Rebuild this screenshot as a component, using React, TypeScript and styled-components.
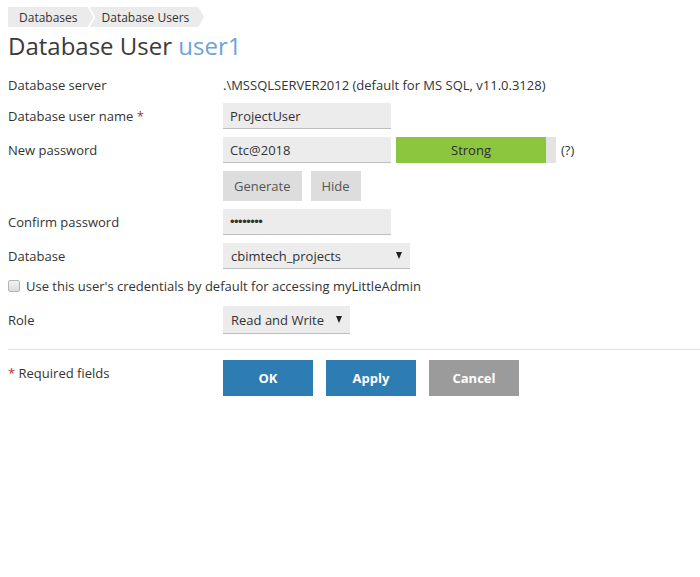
import React from "react";
import styled, { createGlobalStyle } from "styled-components";

const GlobalStyle = createGlobalStyle`
  html, body {
    margin: 0;
    padding: 0;
    background: #ffffff;
  }
  body {
    font-family: "Open Sans", "Liberation Sans", sans-serif;
    font-size: 13px;
    color: #333333;
  }
`;

const Page = styled.div`
  padding: 7px 0 0 8px;
`;

const Breadcrumbs = styled.nav`
  display: flex;
  height: 20px;
`;

const Crumb = styled.a<{ $first?: boolean }>`
  display: flex;
  align-items: center;
  height: 20px;
  background: #ebebeb;
  color: #333;
  font-size: 12px;
  text-decoration: none;
  padding: ${(p) => (p.$first ? "0 16px 0 11px" : "0 15px 0 12px")};
  margin-left: ${(p) => (p.$first ? "0" : "-4px")};
  clip-path: ${(p) =>
    p.$first
      ? "polygon(0 0, calc(100% - 6px) 0, 100% 50%, calc(100% - 6px) 100%, 0 100%)"
      : "polygon(0 0, calc(100% - 6px) 0, 100% 50%, calc(100% - 6px) 100%, 0 100%, 6px 50%)"};
`;

const Title = styled.h1`
  margin: 4px 0 14px;
  font-size: 24px;
  line-height: 30px;
  font-weight: 400;
  color: #3a3a3a;
`;

const TitleName = styled.span`
  color: #6aa3d9;
`;

const Form = styled.div`
  display: flex;
  flex-direction: column;
`;

const Row = styled.div<{ $gap?: number; $top?: number }>`
  display: grid;
  grid-template-columns: 215px auto;
  align-items: center;
  margin-top: ${(p) => (p.$top ?? 0)}px;
  margin-bottom: ${(p) => (p.$gap ?? 8)}px;
`;

const Label = styled.div`
  font-size: 13px;
  line-height: 20px;
  color: #333;
`;

const Req = styled.span`
  color: #b03030;
`;

const Value = styled.div`
  font-size: 13px;
  line-height: 20px;
`;

const Field = styled.div<{ $w?: number; $h?: number }>`
  display: flex;
  align-items: center;
  box-sizing: border-box;
  width: ${(p) => p.$w ?? 168}px;
  height: ${(p) => p.$h ?? 26}px;
  padding: 0 7px;
  background: #ececec;
  border-bottom: 1px solid #bdbdbd;
  font-size: 13px;
  color: #333;
`;

const Dots = styled.span`
  font-size: 13px;
  letter-spacing: -0.5px;
  font-family: "Liberation Sans", sans-serif;
`;

const Select = styled(Field)`
  justify-content: space-between;
  padding: 0 8px 0 8px;
`;

const Arrow = styled.span`
  width: 0;
  height: 0;
  border-left: 3.5px solid transparent;
  border-right: 3.5px solid transparent;
  border-top: 7px solid #222;
`;

const Inline = styled.div`
  display: flex;
  align-items: center;
`;

const Strength = styled.div`
  margin-left: 5px;
  width: 160px;
  height: 26px;
  background: #e3e3e3;
  display: flex;
`;

const StrengthFill = styled.div`
  background: #8cc63f;
  display: flex;
  align-items: center;
  justify-content: center;
  color: #2b2b2b;
  font-size: 13px;
`;

const Help = styled.span`
  margin-left: 5px;
  font-size: 13px;
`;

const Buttons = styled.div`
  display: flex;
  gap: 9px;
`;

const GrayButton = styled.button`
  height: 30px;
  padding: 0 11px;
  border: none;
  background: #dddddd;
  color: #555;
  font-family: "Open Sans", "Liberation Sans", sans-serif;
  font-size: 13px;
`;

const CheckRow = styled.label`
  display: flex;
  align-items: center;
  height: 18px;
  margin-bottom: 9px;
  font-size: 13px;
`;

const Box = styled.span`
  box-sizing: border-box;
  width: 12px;
  height: 12px;
  border: 1px solid #b5b5b5;
  border-radius: 2px;
  background: linear-gradient(#f2f2f2, #dcdcdc);
  margin-right: 6px;
`;

const Divider = styled.hr`
  border: none;
  border-top: 1px solid #dddddd;
  margin: 15px 0 10px;
`;

const Footer = styled.div`
  display: grid;
  grid-template-columns: 215px auto;
  align-items: start;
`;

const Note = styled.div`
  padding-top: 3px;
  line-height: 20px;
`;

const Actions = styled.div`
  display: flex;
  gap: 13px;
`;

const ActionButton = styled.button<{ $tone: "primary" | "muted" }>`
  width: 90px;
  height: 36px;
  border: none;
  background: ${(p) => (p.$tone === "primary" ? "#2d7db3" : "#9b9b9b")};
  color: #fff;
  font-family: "Open Sans", "Liberation Sans", sans-serif;
  font-size: 13px;
  font-weight: 700;
`;

export default function App() {
  return (
    <Page>
      <GlobalStyle />
      <Breadcrumbs>
        <Crumb $first>Databases</Crumb>
        <Crumb>Database Users</Crumb>
      </Breadcrumbs>
      <Title>
        Database User <TitleName>user1</TitleName>
      </Title>
      <Form>
        <Row $gap={8}>
          <Label>Database server</Label>
          <Value>.\MSSQLSERVER2012 (default for MS SQL, v11.0.3128)</Value>
        </Row>
        <Row>
          <Label>
            Database user name <Req>*</Req>
          </Label>
          <Field>ProjectUser</Field>
        </Row>
        <Row>
          <Label>New password</Label>
          <Inline>
            <Field>Ctc@2018</Field>
            <Strength>
              <StrengthFill style={{ width: `${(150 / 160) * 100}%` }}>Strong</StrengthFill>
            </Strength>
            <Help>(?)</Help>
          </Inline>
        </Row>
        <Row>
          <div />
          <Buttons>
            <GrayButton>Generate</GrayButton>
            <GrayButton>Hide</GrayButton>
          </Buttons>
        </Row>
        <Row>
          <Label>Confirm password</Label>
          <Field>
            <Dots>••••••••</Dots>
          </Field>
        </Row>
        <Row>
          <Label>Database</Label>
          <Select $w={187}>
            <span>cbimtech_projects</span>
            <Arrow />
          </Select>
        </Row>
        <CheckRow>
          <Box />
          Use this user's credentials by default for accessing myLittleAdmin
        </CheckRow>
        <Row $gap={0} $top={2}>
          <Label>Role</Label>
          <Select $w={127} $h={28}>
            <span>Read and Write</span>
            <Arrow />
          </Select>
        </Row>
      </Form>
      <Divider />
      <Footer>
        <Note>
          <Req>*</Req> Required fields
        </Note>
        <Actions>
          <ActionButton $tone="primary">OK</ActionButton>
          <ActionButton $tone="primary">Apply</ActionButton>
          <ActionButton $tone="muted">Cancel</ActionButton>
        </Actions>
      </Footer>
    </Page>
  );
}
